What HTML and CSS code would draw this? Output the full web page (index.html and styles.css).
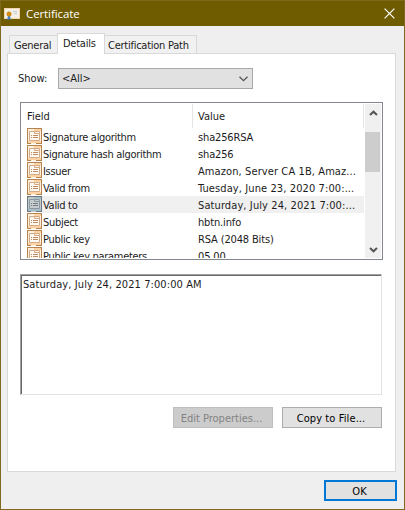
FILE: index.html
```html
<!DOCTYPE html>
<html lang="en">
<head>
<meta charset="utf-8">
<title>Certificate</title>
<link rel="stylesheet" href="styles.css">
</head>
<body>
<svg width="0" height="0" class="defs" aria-hidden="true">
  <symbol id="field" viewBox="0 0 15 16">
    <rect class="i-bg" width="15" height="16"/>
    <path class="i-glow" d="M7 1H14V3H7zM1 13H14V15H1z"/>
    <path class="i-edge" d="M.5 0V16M14.5 0V16M0 .5H15M0 15.5H4M9 15.5H15"/>
    <path class="i-panel" d="M2.5 3.5H7.5V5.5H12.5V12.5H2.5zM7.5 3.5H12.5V5.5"/>
    <path class="i-line" d="M4 7.5H5M6 7.5H11M4 9.5H5M6 9.5H11"/>
  </symbol>
</svg>
<div class="window">
  <header class="titlebar">
    <svg class="cert" width="16" height="13" viewBox="0 0 16 13">
      <rect x=".5" y=".5" width="15" height="10" fill="#f4f0e8" stroke="#f1d6ae"/>
      <path d="M9 3.5H13M10 5.5H13" stroke="#c9ccd2"/>
      <path d="M4 8L3 12 5 11 7 12 6 8z" fill="#3f82d0"/>
      <circle cx="5" cy="6" r="2.5" fill="#cf8b13"/>
    </svg>
    <h1>Certificate</h1>
    <svg class="close" width="11" height="11" viewBox="0 0 11 11"><path d="M.6 .6L10.4 10.4M10.4 .6L.6 10.4"/></svg>
  </header>
  <nav class="tabs">
    <div class="tab t-general"><span>General</span></div>
    <div class="tab active"><span>Details</span></div>
    <div class="tab t-path"><span>Certification Path</span></div>
  </nav>
  <main class="panel">
    <div class="show">
      <label>Show:</label>
      <div class="select"><span>&lt;All&gt;</span><svg width="9" height="6" viewBox="0 0 9 6"><path d="M.5 .8L4.5 4.6 8.5 .8"/></svg></div>
    </div>
    <div class="list">
      <div class="table">
        <div class="head"><div>Field</div><div>Value</div></div>
        <div class="row"><svg><use href="#field"/></svg><div class="name">Signature algorithm</div><div class="value">sha256RSA</div></div>
        <div class="row"><svg><use href="#field"/></svg><div class="name">Signature hash algorithm</div><div class="value">sha256</div></div>
        <div class="row"><svg><use href="#field"/></svg><div class="name">Issuer</div><div class="value wide">Amazon, Server CA 1B, Amaz...</div></div>
        <div class="row"><svg><use href="#field"/></svg><div class="name">Valid from</div><div class="value wide">Tuesday, June 23, 2020 7:00:...</div></div>
        <div class="row selected"><svg><use href="#field"/></svg><div class="name">Valid to</div><div class="value wide">Saturday, July 24, 2021 7:00:...</div></div>
        <div class="row"><svg><use href="#field"/></svg><div class="name">Subject</div><div class="value">hbtn.info</div></div>
        <div class="row"><svg><use href="#field"/></svg><div class="name">Public key</div><div class="value">RSA (2048 Bits)</div></div>
        <div class="row"><svg><use href="#field"/></svg><div class="name">Public key parameters</div><div class="value">05 00</div></div>
      </div>
      <div class="scroll">
        <svg width="9" height="7" viewBox="0 0 9 7"><path d="M1 5L4.5 1.7 8 5"/></svg>
        <div class="thumb"></div>
        <svg class="down" width="9" height="7" viewBox="0 0 9 7"><path d="M1 2L4.5 5.3 8 2"/></svg>
      </div>
    </div>
    <div class="detail">Saturday, July 24, 2021 7:00:00 AM</div>
    <div class="actions">
      <div class="button disabled"><span>Edit Properties...</span></div>
      <div class="button copy"><span>Copy to File...</span></div>
    </div>
  </main>
  <footer><div class="button ok"><span>OK</span></div></footer>
</div>
</body>
</html>
```
FILE: styles.css
```css
* { box-sizing: border-box; }
body { margin: 0; font: 11px/17px "DejaVu Sans Condensed", "DejaVu Sans", sans-serif; font-stretch: condensed; color: #1c1c1c; }
.defs { position: absolute; }
.window { width: 405px; height: 510px; background: #efefef; border: 1px solid #7d6a1c; overflow: hidden; }
.titlebar { height: 25px; background: #705c00; display: flex; align-items: center; padding: 0 9px 0 3px; }
.cert { margin-top: 2px; }
h1 { font: 11.5px/16px "Open Sans", sans-serif; color: #fff; margin: 0 auto 0 6px; letter-spacing: -.1px; }
.close path { fill: none; stroke: #fff; stroke-width: 1.2; }
.tabs { display: flex; align-items: flex-end; height: 28px; padding-left: 8px; position: relative; z-index: 1; }
.tab { height: 18px; margin-bottom: 1px; border: 1px solid #d9d9d9; border-bottom: 0; background: #f1f1f1; line-height: 20px; white-space: nowrap; letter-spacing: -.25px; }
.t-general { width: 48px; border-right: 0; padding-left: 4px; }
.t-path { width: 92px; border-left: 0; padding-left: 3px; }
.active { width: 48px; height: 21px; margin-bottom: 0; background: #fff; padding-left: 5px; line-height: 19px; }
.panel { margin: -1px 0 0 6px; width: 389px; height: 419px; background: #fff; border: 1px solid #d9d9d9; padding: 14px 12px 0; }
.show { display: flex; height: 21px; line-height: 21px; }
.show label { width: 38px; margin-left: -2px; }
.select { width: 195px; height: 21px; margin-left: 2px; border: 1px solid #a9a9a9; background: #e1e1e1; display: flex; align-items: center; justify-content: space-between; padding: 0 4px 0 3px; }
.select path { fill: none; stroke: #555; stroke-width: 1.3; }
.list { width: 363px; height: 158px; margin-top: 13px; border: 1px solid #828790; padding: 1px; display: flex; justify-content: space-between; }
.table { width: 342px; height: 154px; overflow: hidden; }
.head { display: flex; height: 24px; line-height: 26px; }
.head div { width: 171px; border-right: 1px solid #e5e5e5; padding-left: 5px; }
.row { display: flex; height: 17px; padding-left: 5px; white-space: nowrap; line-height: 19px; }
.row svg { width: 15px; height: 16px; flex: none; }
.name { width: 151px; padding-left: 1px; letter-spacing: -.3px; }
.value { width: 171px; padding-left: 5px; letter-spacing: -.15px; }
.wide { letter-spacing: .1px; }
.selected .name, .selected .value { background: #f0f0f0; }
.i-bg { fill: #fff0df; }
.i-glow { fill: #ffd2a4; }
.i-edge { fill: none; stroke: #b5834f; }
.i-panel { fill: #fffaf3; stroke: #d2ab86; }
.i-line { fill: none; stroke: #c08b60; }
.selected svg { filter: grayscale(.85) sepia(.3) hue-rotate(160deg) brightness(.8); }
.scroll { width: 16px; height: 154px; background: #f0f0f0; display: flex; flex-direction: column; align-items: center; padding-top: 6px; }
.scroll path { fill: none; stroke: #555; stroke-width: 2; }
.thumb { width: 15px; height: 40px; margin-top: 15px; background: #cdcdcd; align-self: flex-start; }
.down { margin-top: 74px; }
.detail { width: 362px; height: 121px; margin-top: 14px; border: 1px solid #e3e3e3; border-top-color: #a0a0a0; border-left-color: #a0a0a0; box-shadow: inset 1px 1px #696969; padding: 1px 2px; letter-spacing: .09px; }
.actions { display: flex; gap: 9px; margin: 12px 0 0 153px; }
.button { width: 100px; height: 21px; border: 1px solid #adadad; background: #e1e1e1; color: #000; text-align: center; line-height: 21px; white-space: nowrap; }
.disabled { background: #ccc; border-color: #bfbfbf; color: #838383; padding-right: 3px; }
.copy { padding-right: 2px; letter-spacing: .1px; }
footer { display: flex; justify-content: flex-end; padding: 8px 7px 0; }
.ok { width: 73px; border: 2px solid #0078d7; line-height: 19px; padding-right: 2px; }
```
